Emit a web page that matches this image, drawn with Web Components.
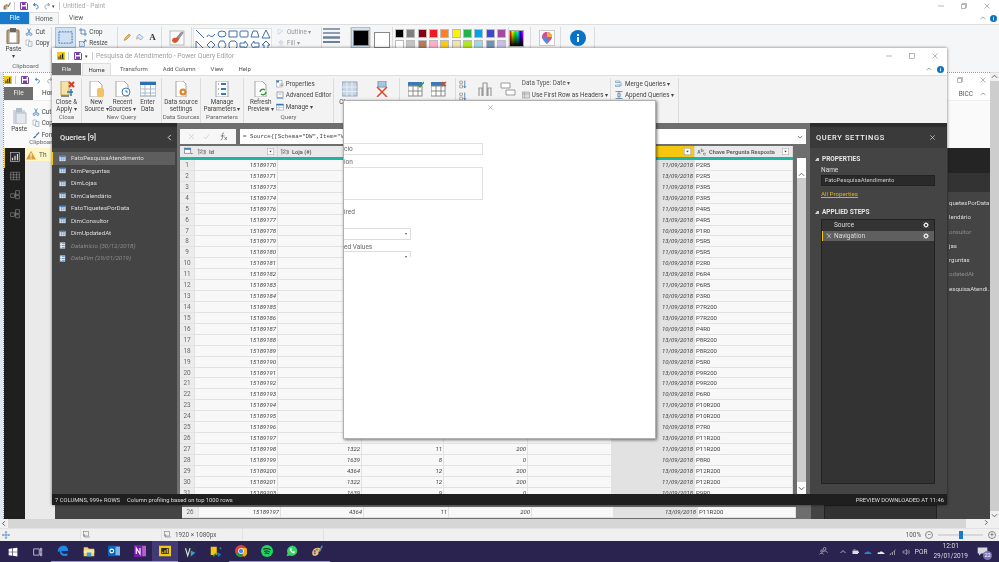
<!DOCTYPE html>
<html lang="en">
<head>
<meta charset="utf-8">
<title>Pesquisa de Atendimento - Power Query Editor</title>
<style>
  html, body { margin: 0; padding: 0; background: #f0f0f0; }
  body { font-family: Roboto, "Liberation Sans", sans-serif; color: #444; }
</style>
</head>
<body>
<desk-screen>
  <paint-chrome></paint-chrome>
  <paint-canvas></paint-canvas>
  <paint-foot></paint-foot>
  <task-bar></task-bar>
  <pbi-shot></pbi-shot>
  <pq-window>
    <pq-dialog></pq-dialog>
  </pq-window>
</desk-screen>

<script>
// every icon used on the page, drawn at a 16 unit box
const ICONS = {
  pbi: '<rect width="16" height="16" fill="#f2c811"/><path d="M3 13V9h2v4zM6.500 13V6h2v7zM10 13V3h2.500v10z" fill="#222"/><path d="M2 13.500h12" stroke="#222"/>',
  save: '<path d="M1 1h12l2 2v12H1z" fill="#fff" stroke="#7b3fa8" stroke-width="2"/><rect x="4" y="2" width="7" height="4" fill="#7b3fa8"/><rect x="4" y="9" width="8" height="5" fill="#7b3fa8"/>',
  undo: '<path d="M3 6l3-4M3 6l4 2M3 6c5-2 10 0 9 5-.5 2-2 3-4 3" fill="none" stroke="#2a7ab8" stroke-width="2"/>',
  redo: '<path d="M13 6l-3-4M13 6l-4 2M13 6C8 4 3 6 4 11c.5 2 2 3 4 3" fill="none" stroke="#9aa7b5" stroke-width="2"/>',
  paintapp: '<path d="M2 13c-2-6 4-11 9-9 3 1 2 4 0 4-2 1 0 4-2 5-2 2-6 2-7 0z" fill="#e8c27a"/><circle cx="5" cy="8" r="1.500" fill="#e33"/><circle cx="8" cy="6" r="1.500" fill="#3a7"/><circle cx="5" cy="11" r="1.500" fill="#37c"/><path d="M11 9l4-8" stroke="#68a" stroke-width="2"/>',
  paste: '<rect x="2" y="2" width="12" height="14" rx="1" fill="#c9a878" stroke="#8a6a3e"/><rect x="4" y="4" width="8" height="11" fill="#fff" stroke="#999"/><rect x="5" y="0" width="6" height="4" fill="#666"/>',
  pastedim: '<rect x="2" y="2" width="12" height="14" fill="#cfd6de"/><rect x="5" y="5" width="10" height="11" fill="#e4e8ee" stroke="#b4bcc8"/><rect x="5" y="0" width="6" height="4" fill="#b4bcc8"/>',
  cut: '<path d="M5 1l5 9M11 1l-5 9" stroke="#3b78b5" stroke-width="1.500"/><circle cx="4.500" cy="12.500" r="2.300" fill="none" stroke="#3b78b5" stroke-width="1.500"/><circle cx="11.500" cy="12.500" r="2.300" fill="none" stroke="#3b78b5" stroke-width="1.500"/>',
  copy: '<path d="M2 2h7v10H2z" fill="#fff" stroke="#7f8fa6"/><path d="M7 5h7v10H7z" fill="#eaf0f7" stroke="#7f8fa6"/>',
  brushsm: '<path d="M2 14l4-5 3 2-4 4zM7 8l6-6 2 2-6 6z" fill="#5a7fa8"/>',
  select: '<rect x="1" y="2" width="14" height="12" fill="#cfe0f2" stroke="#3f6fa8" stroke-dasharray="2 1"/>',
  crop: '<path d="M4 0v12h12M0 4h12v12" fill="none" stroke="#3b6ea5" stroke-width="1.500"/>',
  resize: '<rect x="1" y="5" width="10" height="10" fill="#dbe6f2" stroke="#3b6ea5"/><path d="M8 8l6-6M10 2h4v4" fill="none" stroke="#3b6ea5" stroke-width="1.500"/>',
  pencil: '<path d="M2 15l2-5 8-8 3 3-8 8z" fill="#e9b44c" stroke="#a87a20"/>',
  fill: '<path d="M7 2l7 7-5 5-7-7z" fill="#dfe9f5" stroke="#3b6ea5"/><path d="M2 8c-2 3-1 5 0 5s2-2 0-5z" fill="#e2654a"/>',
  brush: '<rect x="1" y="1" width="14" height="14" fill="#fafafa" stroke="#bbb"/><path d="M3 11c2 3 5 2 6 0L14 3l-2-1-5 6c-2-1-4 0-4 3z" fill="#d9542b"/><path d="M9 8l5-6" stroke="#8a9bb0" stroke-width="2"/>',
  outline: '<path d="M2 14l3-1 8-8-2-2-8 8zM1 2h7v2H3v9H1z" fill="#c2ccd8"/>',
  filla: '<path d="M8 2l5 5-5 5-5-5zM2 14h12" fill="#c2ccd8" stroke="#a8b4c2"/>',
  sizeic: '<path d="M0 2h16M0 6h16" stroke="#6d8099" stroke-width="1.500"/><path d="M0 10.500h16" stroke="#6d8099" stroke-width="2.500"/><path d="M0 15h16" stroke="#6d8099" stroke-width="2"/>',
  p3d: '<rect x=".5" y=".5" width="15" height="15" fill="#fff" stroke="#ccc"/><path d="M8 2c3 0 5 2 5 5 0 2-3 5-5 7-2-2-5-5-5-7 0-3 2-5 5-5z" fill="#d24f9a"/><path d="M8 2c3 0 5 2 5 5H8z" fill="#f0b43c"/><path d="M3 7h5v7C6 12 3 9 3 7z" fill="#4a8fe0"/>',
  help: '<circle cx="8" cy="8" r="8" fill="#0a72c6"/><path d="M7 4h2v2H7zM7 7h2v5H7z" fill="#fff"/>',
  caret: '<path d="M3 10l5-4 5 4" fill="none" stroke="#888" stroke-width="1.500"/>',
  min: '<path d="M2 8h12" stroke="#888" stroke-width="1.200"/>',
  max: '<rect x="3" y="3" width="10" height="10" fill="none" stroke="#888" stroke-width="1.200"/>',
  restore: '<path d="M3 5h8v8H3zM5 5V3h8v8h-2" fill="none" stroke="#888" stroke-width="1.200"/>',
  close: '<path d="M3 3l10 10M13 3L3 13" stroke="#888" stroke-width="1.200"/>',
  closewhite: '<path d="M3 3l10 10M13 3L3 13" stroke="#ddd" stroke-width="1.500"/>',
  closeapply: '<rect x="2" y="0" width="8" height="14" fill="#f3e3a8" stroke="#caa84a"/><path d="M10 1l5 5M15 1l-5 5" stroke="#d83b2d" stroke-width="2"/><path d="M8 11h6M12 8v7" stroke="#2a7ab8" stroke-width="1.500"/><rect x="2" y="14" width="8" height="2" fill="#888"/>',
  newsrc: '<path d="M1 0h8l4 4v12H1z" fill="#fff" stroke="#a6a6a6"/><rect x="8" y="7" width="7" height="9" rx="2" fill="#f3c063"/>',
  recent: '<path d="M1 0h8l4 4v12H1z" fill="#fff" stroke="#a6a6a6"/><circle cx="11" cy="11" r="4" fill="#fff" stroke="#3b78b5"/><path d="M11 9v2h2" fill="none" stroke="#3b78b5"/>',
  enter: '<rect x="0" y="1" width="16" height="14" fill="#fff" stroke="#8aa0b8"/><rect x="0" y="1" width="16" height="3" fill="#2f6fb3"/><path d="M0 8h16M0 12h16M5 4v11M10.500 4v11" stroke="#a8b8c8"/>',
  dss: '<path d="M3 0h7l3 3v13H3z" fill="#fff" stroke="#a6a6a6"/><circle cx="10" cy="11" r="3.500" fill="#e2852a"/><circle cx="10" cy="11" r="1.300" fill="#fff"/>',
  params: '<rect x="2" y="0" width="12" height="16" fill="#fff" stroke="#9aa7b5"/><path d="M7 3h5M7 8h5M7 13h5" stroke="#3b78b5" stroke-width="2"/><path d="M4 3h1M4 8h1M4 13h1" stroke="#666"/>',
  refresh: '<path d="M2 0h7l4 4v12H2z" fill="#fff" stroke="#a6a6a6"/><path d="M7 11a3 3 0 0 1 5-2M13 11a3 3 0 0 1-5 2" fill="none" stroke="#3f9a3f" stroke-width="1.500"/>',
  props: '<rect x="1" y="1" width="11" height="13" fill="#fff" stroke="#7f8fa6"/><rect x="1" y="1" width="5" height="4" fill="#3b78b5"/><path d="M7 8h8M7 11h8" stroke="#666"/>',
  adved: '<rect x="2" y="2" width="12" height="11" fill="#fff" stroke="#555"/><path d="M1 15h14M5 6h6" stroke="#3b78b5"/>',
  manage: '<rect x="1" y="2" width="14" height="12" fill="#fff" stroke="#6f8aa8"/><rect x="1" y="2" width="14" height="3" fill="#3b78b5"/><path d="M1 9h14M6 5v9" stroke="#9ab"/>',
  choose: '<rect x="0" y="1" width="15" height="14" fill="#c7d5e5" stroke="#8fa3b8"/><path d="M5 1v14M10 1v14M0 6h15M0 10.500h15" stroke="#e8eef5"/>',
  remcol: '<path d="M4 0h8v6H4z" fill="#a9c4de" stroke="#7f9ab5"/><path d="M3 6l10 10M13 6L3 16" stroke="#d84a2a" stroke-width="1.500"/>',
  keep: '<rect x="0" y="1" width="14" height="4" fill="#3b78b5"/><rect x="0" y="5" width="14" height="10" fill="#fff" stroke="#888"/><path d="M0 10h14M5 5v10M10 5v10" stroke="#888"/><path d="M10 4l2 2 4-5" fill="none" stroke="#3f9a3f" stroke-width="1.500"/>',
  remrow: '<rect x="0" y="1" width="14" height="4" fill="#3b78b5"/><rect x="0" y="5" width="14" height="10" fill="#fff" stroke="#888"/><path d="M0 10h14M5 5v10M10 5v10" stroke="#888"/><path d="M11 1l4 4M15 1l-4 4" stroke="#d84a2a" stroke-width="1.500"/>',
  sortaz: '<path d="M12 1v12M10 11l2 3 2-3" fill="none" stroke="#3b78b5" stroke-width="1.500"/><path d="M3 2h5v4H3zM3 9h5v5H3z" fill="none" stroke="#777"/>',
  split: '<path d="M2 15V7h3v8M6 15V2h4v13M11 15V7h3v8" fill="none" stroke="#9a9a9a" stroke-width="1.200"/>',
  group: '<path d="M1 2h9v5H1zM6 9h9v5H6z" fill="#fff" stroke="#999"/>',
  typedoc: '<rect x="1" y="2" width="14" height="12" fill="#ddd" stroke="#888"/><path d="M1 6h14M5 2v12" stroke="#888"/>',
  merge: '<path d="M1 2h9v3H1zM1 10h9v3H1z" fill="none" stroke="#3b78b5"/><path d="M12 4v7M10 9l2 2 2-2" fill="none" stroke="#3b78b5"/>',
  append: '<path d="M1 1h14M8 1v14M1 15h14" stroke="#3b78b5" stroke-width="1.500"/><path d="M5 5h6v6H5z" fill="none" stroke="#777"/>',
  table: '<rect x="1" y="2" width="14" height="12" fill="#fff"/><path d="M1 2h14v3H1z" fill="#4e83bd"/><path d="M1 7h14M1 11h14M6 2v12M11 2v12" stroke="#4e83bd" stroke-width="1.200"/>',
  paramq: '<rect x="2" y="1" width="12" height="14" fill="#dfe9f2"/><path d="M7 3h6M7 8h6M7 13h6" stroke="#4e83bd" stroke-width="2"/><path d="M3 3h2M3 8h2M3 13h2" stroke="#888" stroke-width="2"/>',
  gear: '<circle cx="8" cy="8" r="4.500" fill="none" stroke="#eee" stroke-width="3"/><path d="M8 0v3M8 13v3M0 8h3M13 8h3M2 2l2 2M12 12l2 2M2 14l2-2M12 4l2-2" stroke="#eee" stroke-width="2"/>',
  cross: '<path d="M3 2l10 12M13 2L3 14M2 4l3-3" stroke="#eee" stroke-width="1.500" fill="none"/>',
  report: '<rect x="1" y="1" width="14" height="14" fill="#2d2d2d" stroke="#ccc"/><path d="M4 13V9M8 13V6M12 13V3" stroke="#ddd" stroke-width="2"/>',
  datav: '<path d="M1 2h14v12H1zM1 6h14M1 10h14M5.500 2v12M10.500 2v12" fill="none" stroke="#8a8a8a"/>',
  relat: '<path d="M1 6h6v6H1zM9 1h6v6H9zM9 9h6v5H9zM7 9h2M9 4v7" fill="none" stroke="#8a8a8a"/>',
  warn: '<path d="M8 1l8 14H0z" fill="#d9a03a"/><path d="M8 5v6M8 12v2" stroke="#fff" stroke-width="1.600"/>',
  corner: '<rect x="1" y="2" width="11" height="9" fill="#fff" stroke="#557"/><rect x="1" y="2" width="11" height="3" fill="#3b78b5"/><path d="M12 11l2 2 2-2" fill="#444"/>',
  ddown: '<rect x=".5" y=".5" width="15" height="15" fill="#fff" stroke="#999"/><path d="M5 6h6l-3 4z" fill="#444"/>',
  num: '<path d="M1 4l2-2v11M5 6c0-3 4-3 4-1 0 2-4 3-4 5h4M10 11c1 1 4 1 4-1 0-1-1-2-3-2 2 0 3-1 3-2 0-1-3-2-4 0" fill="none" stroke="#666" stroke-width="1.200"/>',
  abc: '<path d="M1 12l2-8 2 8M2 9h2M7 1v6h2c2 0 2-3 0-3H7M14 11c-1-1-4-1-4 1s3 3 4 1" fill="none" stroke="#666" stroke-width="1.200"/>',
  chevdown: '<path d="M2 5l6 6 6-6" fill="none" stroke="#555" stroke-width="2"/>',
  chevup: '<path d="M2 11l6-6 6 6" fill="none" stroke="#555" stroke-width="2"/>',
  chevleftw: '<path d="M11 2L5 8l6 6" fill="none" stroke="#eee" stroke-width="2"/>',
  chevleft: '<path d="M11 3L6 8l5 5" fill="none" stroke="#444" stroke-width="2"/>',
  chevright: '<path d="M5 3l5 5-5 5" fill="none" stroke="#444" stroke-width="2"/>',
  fx: '<path d="M9 2C6 1 6 4 6 7s0 7-3 7M3 7h7M10 9l4 5M14 9l-4 5" fill="none" stroke="#555" stroke-width="1.200"/>',
  tick: '<path d="M2 9l4 4 8-10" fill="none" stroke="#c4c4c4" stroke-width="1.500"/>',
  xgray: '<path d="M2 2l12 12M14 2L2 14" stroke="#c4c4c4" stroke-width="1.500"/>',
  move: '<path d="M8 1v14M1 8h14M6 3l2-2 2 2M6 13l2 2 2-2M3 6L1 8l2 2M13 6l2 2-2 2" fill="none" stroke="#3b78b5" stroke-width="1.400"/>',
  shot: '<rect x="1" y="1" width="10" height="9" fill="none" stroke="#667"/><path d="M3 6v6h11" fill="none" stroke="#667"/>',
  start: '<path d="M1 3l6-1v5.500H1zM8 2l7-1v6.500H8zM1 8.500h6V14l-6-1zM8 8.500h7V15l-7-1z" fill="#fff"/>',
  taskview: '<path d="M1 3h9v10H1zM12 2h2v5h-2zM12 9h2v5h-2z" fill="none" stroke="#cfcfdc" stroke-width="1.300"/>',
  edge: '<path d="M1 9C1 3 5 1 9 1c4 0 6 3 6 7H6c0 3 4 5 8 3v3c-5 2-11 0-10-6-1 1-2 1-3 1z" fill="#1e88e5"/>',
  folder: '<path d="M1 3h5l2 2h7v10H1z" fill="#f4d36b"/><path d="M1 7h14v4H1z" fill="#f9e7a8"/><rect x="5" y="10" width="6" height="5" fill="#3aa0e0"/>',
  outlook: '<rect x="5" y="2" width="11" height="12" fill="#79b8ee"/><rect x="0" y="1" width="10" height="14" fill="#0a64b8"/><circle cx="5" cy="8" r="2.500" fill="none" stroke="#fff" stroke-width="1.500"/>',
  onenote: '<rect x="4" y="1" width="12" height="14" fill="#b35fd0"/><rect x="0" y="0" width="11" height="16" fill="#7719aa"/><path d="M3 12V4l5 8V4" fill="none" stroke="#fff" stroke-width="1.500"/>',
  pbitask: '<rect width="16" height="14" y="1" fill="#f2c811"/><rect x="3" y="4" width="10" height="8" fill="#2b2b2b"/><path d="M5 11V9M8 11V7M11 11V5" stroke="#f2c811" stroke-width="1.500"/>',
  vs: '<rect width="16" height="16" fill="#2a2a44"/><path d="M2 3l3 10 3-10" fill="none" stroke="#ddd" stroke-width="1.500"/><path d="M9 6l6 3-6 5z" fill="#3b9ad8"/>',
  shapes: '<rect x="1" y="1" width="8" height="11" fill="#f2c811"/><path d="M9 8l6 3-4 4z" fill="#1d7ac8"/><path d="M4 14l4-4M13 2l2 2" stroke="#2a8a4a" stroke-width="2"/>',
  chrome: '<circle cx="8" cy="8" r="8" fill="#db4437"/><path d="M8 8L1 12a8 8 0 0 0 7 4l4-7z" fill="#0f9d58"/><path d="M8 8l4 8a8 8 0 0 0 3-12H8z" fill="#f4b400"/><circle cx="8" cy="8" r="3.500" fill="#4285f4" stroke="#fff"/>',
  spotify: '<circle cx="8" cy="8" r="8" fill="#1ed760"/><path d="M3 5.500c4-1 7-1 10 1M4 8.500c3-1 6-.5 8 1M5 11c2-.5 4-.5 6 1" fill="none" stroke="#111" stroke-width="1.300"/>',
  whats: '<path d="M1 15l1-4C0 6 4 1 8 1s7 3 7 7-5 8-10 6z" fill="#37d366"/><path d="M5 5c0 3 3 6 6 6l1-2-2-1-1 1-2-2 1-1-1-2z" fill="#fff"/>',
  people: '<circle cx="5" cy="9" r="2" fill="none" stroke="#ddd"/><circle cx="10" cy="5" r="2.500" fill="none" stroke="#ddd"/><path d="M1 15c0-3 7-3 7 0M7 11c1-3 7-3 8 1" fill="none" stroke="#ddd"/>',
  battery: '<rect x="1" y="5" width="11" height="7" fill="#ddd"/><rect x="12" y="7" width="2" height="3" fill="#ddd"/><path d="M3 3h4" stroke="#ddd"/>',
  cloudb: '<path d="M1 12c0-3 2-4 4-3 1-3 6-3 7 0 2 0 3 1 3 3z" fill="#1e88e5"/>',
  cloudw: '<path d="M1 12c0-3 2-4 4-3 1-3 6-3 7 0 2 0 3 1 3 3z" fill="#eee"/>',
  wifi: '<path d="M2 14h2v-3H2zM6 14h2V8H6zM10 14h2V5h-2z" fill="#8d8da5"/><path d="M1 14L14 3" stroke="#aaa"/>',
  sound: '<path d="M2 6h3l4-3v10l-4-3H2z" fill="none" stroke="#ddd"/><path d="M11 5c1 2 1 4 0 6M13 3c2 3 2 7 0 10" fill="none" stroke="#ddd"/>',
  notif: '<path d="M1 2h14v9H6l-3 3v-3H1z" fill="#d8d8e0"/>',
  up: '<path d="M3 10l5-5 5 5" fill="none" stroke="#ddd" stroke-width="1.500"/>'
};

class UiIco extends HTMLElement {
  constructor(){
    super();
    this.attachShadow({mode: 'open'});
  }
  connectedCallback(){
    const s = this.getAttribute('s') || 16;
    const w = this.getAttribute('w') || s;
    this.shadowRoot.innerHTML = `
      <style>:host{display:inline-flex;flex:none;line-height:0} svg{display:block}</style>
      <svg width="${w}" height="${s}" viewBox="0 0 16 16" preserveAspectRatio="none">${ICONS[this.getAttribute('n')] || ''}</svg>`;
  }
}
customElements.define('ui-ico', UiIco);

// ribbon group with the caption along the bottom
class RbGroup extends HTMLElement {
  constructor(){
    super();
    this.attachShadow({mode: 'open'});
  }
  connectedCallback(){
    const w = this.getAttribute('w');
    const label = this.getAttribute('label') || '';
    this.shadowRoot.innerHTML = `
      <style>
        :host{display:flex;flex-direction:column;flex:none;width:${w}px;box-sizing:border-box;border-right:1px solid #dcdcdc;margin:2px 0 0}
        .body{flex:1;display:flex;justify-content:center;align-items:flex-start;min-height:0}
        .cap{height:10px;line-height:9px;text-align:center;font-size:6.200px;color:#666;white-space:nowrap}
      </style>
      <div class="body"><slot></slot></div>
      <div class="cap">${label}</div>`;
  }
}
customElements.define('rb-group', RbGroup);

class RbBig extends HTMLElement {
  constructor(){
    super();
    this.attachShadow({mode: 'open'});
  }
  connectedCallback(){
    this.shadowRoot.innerHTML = `
      <style>
        :host{display:flex;flex-direction:column;align-items:center;flex:none;width:${this.getAttribute('w') || 26}px;padding-top:${this.getAttribute('top') || 3}px}
        .t{margin-top:2px;font-size:6.300px;line-height:6.600px;text-align:center;color:#444;white-space:nowrap}
      </style>
      <ui-ico n="${this.getAttribute('n')}" s="${this.getAttribute('s') || 16}"></ui-ico>
      <div class="t"><slot></slot></div>`;
  }
}
customElements.define('rb-big', RbBig);

class RbSmall extends HTMLElement {
  constructor(){
    super();
    this.attachShadow({mode: 'open'});
  }
  connectedCallback(){
    this.shadowRoot.innerHTML = `
      <style>
        :host{display:flex;align-items:center;gap:2px;height:11.500px;font-size:6.300px;color:#444;white-space:nowrap}
      </style>
      <ui-ico n="${this.getAttribute('n')}" s="8"></ui-ico><slot></slot>`;
  }
}
customElements.define('rb-small', RbSmall);

class WinButtons extends HTMLElement {
  constructor(){
    super();
    this.attachShadow({mode: 'open'});
  }
  connectedCallback(){
    const names = this.getAttribute('names').split(' ');
    const gap = this.getAttribute('gap') || 15;
    this.shadowRoot.innerHTML = `
      <style>:host{display:flex;align-items:center;gap:${gap}px}</style>
      ${names.map(n => `<ui-ico n="${n}" s="8"></ui-ico>`).join('')}`;
  }
}
customElements.define('win-buttons', WinButtons);

class DeskScreen extends HTMLElement {
  constructor(){
    super();
    this.attachShadow({mode: 'open'});
  }
  connectedCallback(){
    this.shadowRoot.innerHTML = `
      <style>
        :host{display:flex;flex-direction:column;position:relative;width:999px;height:562px;overflow:hidden;filter:blur(.35px);background:#f0f0f0}
      </style>
      <slot></slot>`;
  }
}
customElements.define('desk-screen', DeskScreen);

class PaintChrome extends HTMLElement {
  constructor(){
    super();
    this.attachShadow({mode: 'open'});
  }
  connectedCallback(){
    const row1 = ['#000','#7f7f7f','#880015','#ed1c24','#ff7f27','#fff200','#22b14c','#00a2e8','#3f48cc','#a349a4'];
    const row2 = ['#fff','#c3c3c3','#b97a57','#ffaec9','#ffc90e','#efe4b0','#b5e61d','#99d9ea','#7092be','#c8bfe7'];
    this.shadowRoot.innerHTML = `
      <style>
        :host{display:flex;flex-direction:column;height:73px;flex:none;background:#fff;font-size:6.500px;color:#666}
        .title{height:12px;display:flex;align-items:center;padding:0 8px 0 2px}
        .title .name{color:#a8a8a8;margin-left:3px}
        .title win-buttons{margin-left:auto}
        .sep{width:1px;height:8px;background:#ccc;flex:none}
        .tabs{height:13px;display:flex;align-items:flex-end;border-bottom:1px solid #dedede;box-sizing:border-box}
        .tab{height:12px;line-height:12px;padding:0 10px;color:#555}
        .tab.file{width:29px;padding:0;background:#1979ca;color:#fff;text-align:center}
        .tab.on{background:#f5f6f7;border:1px solid #dedede;border-bottom:0;box-sizing:border-box;width:30px;padding:0;text-align:center}
        .tabs .right{margin-left:auto;display:flex;align-items:center;gap:3px;padding:0 2px 2px 0}
        .rib{flex:1;display:flex;background:#f5f6f7;border-bottom:1px solid #dedede}
        .col{display:flex;flex-direction:column}
        .sel{width:21px;height:21px;background:#cfe2f3;border:1px solid #9ec3e6;box-sizing:border-box;display:flex;align-items:center;justify-content:center}
        .gal{display:grid;grid-template-columns:repeat(7,11px);grid-auto-rows:10.500px;align-items:center;justify-items:center;border:1px solid #dfe3e8;background:#fff;margin:1px 0 0 1px}
        .gal svg{display:block}
        .swatch{width:16px;height:16px;border:1px solid #888;box-sizing:border-box}
        .c1{width:21px;height:21px;background:#cfe2f3;border:1px solid #9ec3e6;box-sizing:border-box;display:flex;align-items:center;justify-content:center}
        .pal{display:grid;grid-template-columns:repeat(10,11.300px);grid-auto-rows:11px;justify-items:center;align-items:center;padding-top:1px}
        .pal i{display:block;width:9px;height:9px;border:1px solid #bbb;box-sizing:border-box}
        .rainbow{width:15px;height:15px;margin:3px 6px 0 0;border:1px solid #aaa;background:linear-gradient(to bottom,transparent,#000),linear-gradient(to right,#f00,#ff0,#0f0,#0ff,#00f,#f0f)}
        .info{margin-top:3px;line-height:0}
      </style>
      <div class="title">
        <ui-ico n="paintapp" s="9"></ui-ico>
        <i class="sep" style="margin-left:3px"></i>
        <ui-ico n="save" s="8" style="margin-left:5px"></ui-ico>
        <ui-ico n="undo" s="8" style="margin-left:4px"></ui-ico>
        <ui-ico n="redo" s="8" style="margin-left:3px"></ui-ico>
        <span style="font-size:5px;color:#333;margin-left:1px">&#9662;</span>
        <i class="sep" style="margin-left:4px"></i>
        <span class="name">Untitled - Paint</span>
        <win-buttons names="min restore close" gap="15"></win-buttons>
      </div>
      <div class="tabs">
        <div class="tab file">File</div>
        <div class="tab on">Home</div>
        <div class="tab">View</div>
        <div class="right"><ui-ico n="caret" s="8"></ui-ico><ui-ico n="help" s="7"></ui-ico></div>
      </div>
      <div class="rib">
        <rb-group w="52" label="Clipboard">
          <rb-big n="paste" s="16" w="24" top="1">Paste<br>&#9662;</rb-big>
          <div class="col" style="margin-top:-1px"><rb-small n="cut">Cut</rb-small><rb-small n="copy">Copy</rb-small></div>
        </rb-group>
        <rb-group w="66">
          <div class="sel"><ui-ico n="select" s="15"></ui-ico></div>
          <div class="col" style="margin:-1px 6px 0 3px"><rb-small n="crop">Crop</rb-small><rb-small n="resize">Resize</rb-small></div>
        </rb-group>
        <rb-group w="44">
          <div style="display:flex;gap:5px;padding-top:6px"><ui-ico n="pencil" s="8"></ui-ico><ui-ico n="fill" s="8"></ui-ico><span style="font:bold 9px/8px 'Liberation Serif',serif;color:#333">A</span></div>
        </rb-group>
        <rb-group w="30"><div style="padding-top:3px"><ui-ico n="brush" s="16"></ui-ico></div></rb-group>
        <rb-group w="130">
          <div class="gal">
            ${['M1 1l8 8','M1 8c2-6 3 4 8-3','M1 5a4 3 0 1 0 8 0a4 3 0 1 0-8 0','M1 2h8v6H1z','M1 3q0-1 1-1h6q1 0 1 1v4q0 1-1 1H2q-1 0-1-1z','M1 8l2-6h4l2 6z','M5 1l4 8H1z',
               'M1 1v8h8z','M5 1l4 4-4 4-4-4z','M3 1h4l2 4-2 4H3L1 5z','M3 1h4l2 2v4l-2 2H3L1 7V3z','M1 3h5V1l3 4-3 4V7H1z','M9 3H4V1L1 5l3 4V7h5z','M3 9V5H1l4-4 4 4H7v4z']
              .map(d => `<svg width="10" height="10" viewBox="0 0 10 10"><path d="${d}" fill="none" stroke="#3f6fa8"/></svg>`).join('')}
          </div>
          <div class="col" style="margin:-1px auto 0 5px;opacity:.55"><rb-small n="outline">Outline &#9662;</rb-small><rb-small n="filla">Fill &#9662;</rb-small></div>
        </rb-group>
        <rb-group w="29"><div style="margin-right:9px"><ui-ico n="sizeic" s="16" w="17"></ui-ico></div></rb-group>
        <rb-group w="20"><div class="c1"><div class="swatch" style="background:#000"></div></div></rb-group>
        <rb-group w="22"><div class="swatch" style="margin-top:5px;background:#fff"></div></rb-group>
        <rb-group w="116">
          <div class="pal">
            ${row1.concat(row2).map(c => `<i style="background:${c}"></i>`).join('')}
          </div>
        </rb-group>
        <rb-group w="22"><div class="rainbow"></div></rb-group>
        <rb-group w="30"><div style="padding:3px 0 0 3px"><ui-ico n="p3d" s="16"></ui-ico></div></rb-group>
        <rb-group w="34"><div class="info"><ui-ico n="help" s="16"></ui-ico></div></rb-group>
      </div>`;
  }
}
customElements.define('paint-chrome', PaintChrome);

class PaintCanvas extends HTMLElement {
  constructor(){
    super();
    this.attachShadow({mode: 'open'});
  }
  connectedCallback(){
    this.shadowRoot.innerHTML = `
      <style>
        :host{display:flex;flex:1;min-height:0;justify-content:flex-end;background:#dfe7f2}
        .sb{width:9px;background:#f0f0f0;display:flex;flex-direction:column;align-items:center}
        .thumb{flex:1;width:100%;margin:1px 0;background:#cdcdcd}
      </style>
      <div class="sb">
        <ui-ico n="chevup" s="7"></ui-ico>
        <div class="thumb"></div>
        <ui-ico n="chevdown" s="7"></ui-ico>
      </div>`;
  }
}
customElements.define('paint-canvas', PaintCanvas);

class PaintFoot extends HTMLElement {
  constructor(){
    super();
    this.attachShadow({mode: 'open'});
  }
  connectedCallback(){
    this.shadowRoot.innerHTML = `
      <style>
        :host{display:flex;flex-direction:column;flex:none;height:22px;background:#f0f0f0;font-size:6.300px;color:#555}
        .hs{height:9px;display:flex;align-items:center}
        .hs .thumb{height:100%;width:958px;background:#d6d6d6;margin:0 1px}
        .hs .end{margin-left:auto;padding-right:9px}
        .st{flex:1;display:flex;border-top:1px solid #e2e2e2}
        .cell{flex:none;width:81px;box-sizing:border-box;border-right:1px solid #e2e2e2;display:flex;align-items:center;padding-left:2px;gap:3px}
        .zoom{margin-left:auto;display:flex;align-items:center;padding-right:3px}
        .track{width:45px;height:2px;background:#d8d8d8;margin:0 5px;display:flex;align-items:center;padding-left:21px;box-sizing:border-box}
        .track i{display:block;width:4px;height:8px;background:#1979ca;flex:none}
        .round{width:8px;height:8px;border-radius:50%;border:1px solid #8a8a8a;box-sizing:border-box;display:flex;align-items:center;justify-content:center;line-height:5px;font-size:7px}
      </style>
      <div class="hs">
        <ui-ico n="chevleft" s="7"></ui-ico>
        <div class="thumb"></div>
        <div class="end"><ui-ico n="chevright" s="7"></ui-ico></div>
      </div>
      <div class="st">
        <div class="cell"><ui-ico n="move" s="8"></ui-ico></div>
        <div class="cell"><ui-ico n="shot" s="8"></ui-ico></div>
        <div class="cell"><ui-ico n="shot" s="8"></ui-ico>1920 &times; 1080px</div>
        <div class="cell"></div>
        <div class="zoom"><span style="margin-right:4px">100%</span><span class="round">&minus;</span><div class="track"><i></i></div><span class="round">+</span></div>
      </div>`;
  }
}
customElements.define('paint-foot', PaintFoot);

class TaskBar extends HTMLElement {
  constructor(){
    super();
    this.attachShadow({mode: 'open'});
  }
  connectedCallback(){
    const apps = [['start'],['taskview'],['edge',1],['folder',1],['outlook',1],['onenote',1],['pbitask',2],['vs'],['shapes'],['chrome',1],['spotify',1],['whats',1],['paintapp',1]];
    const tray = ['battery','cloudb','cloudw','wifi','sound'];
    this.shadowRoot.innerHTML = `
      <style>
        :host{display:flex;flex:none;height:21px;background:#2a2350;color:#ddd;font-size:6.500px}
        .app{width:25.400px;display:flex;align-items:center;justify-content:center;box-sizing:border-box;flex:none}
        .app.run{border-bottom:1px solid #9f97cf}
        .app.cur{background:#413a74;border-bottom:1px solid #9f97cf}
        .tray{margin-left:auto;display:flex;align-items:center;gap:4.500px}
        .lang{margin:0 1.500px 0 .5px}
        .clock{text-align:center;line-height:9.500px;margin-right:4.500px;white-space:nowrap}
        .note{position:relative;display:flex;margin-right:11px}
        .note span{position:absolute;right:-4px;bottom:-3px;width:9px;height:9px;border-radius:50%;background:#7c74b8;color:#fff;font-size:5.500px;line-height:9px;text-align:center}
      </style>
      ${apps.map(([n, r]) => `<div class="app ${r === 1 ? 'run' : r === 2 ? 'cur' : ''}"><ui-ico n="${n}" s="${n === 'start' || n === 'taskview' ? 10 : 12}"></ui-ico></div>`).join('')}
      <div class="tray">
        <span style="margin-right:7px"><ui-ico n="people" s="9"></ui-ico></span>
        <ui-ico n="up" s="8"></ui-ico>
        ${tray.map(n => `<ui-ico n="${n}" s="8"></ui-ico>`).join('')}
        <span class="lang">POR</span>
        <div class="clock">12:01<br>29/01/2019</div>
        <div class="note"><ui-ico n="notif" s="11"></ui-ico><span>22</span></div>
      </div>`;
  }
}
customElements.define('task-bar', TaskBar);

const rowData = [
  ['15189170','','','','11','P2R5'],['15189171','','','','13','P2R5'],['15189173','','','','11','P3R5'],['15189174','','','','13','P3R5'],
  ['15189176','','','','11','P4R5'],['15189177','','','','13','P4R5'],['15189178','','','','10','P1R0'],['15189179','','','','13','P5R5'],
  ['15189180','','','','11','P5R5'],['15189181','','','','10','P2R0'],['15189182','','','','13','P6R4'],['15189183','','','','11','P6R5'],
  ['15189184','','','','10','P3R0'],['15189185','','','','11','P7R200'],['15189186','','','','13','P7R200'],['15189187','','','','10','P4R0'],
  ['15189188','','','','13','P8R200'],['15189189','','','','11','P8R200'],['15189190','','','','10','P5R0'],['15189191','','','','13','P9R200'],
  ['15189192','','','','11','P9R200'],['15189193','','','','10','P6R0'],['15189194','','','','11','P10R200'],['15189195','','','','13','P10R200'],
  ['15189196','','','','10','P7R0'],['15189197','','','','13','P11R200'],['15189198','1322','11','200','11','P11R200'],['15189199','1639','8','0','10','P8R0'],
  ['15189200','4364','12','200','13','P12R200'],['15189201','1322','12','200','11','P12R200'],['15189203','1639','9','0','10','P9R0']
];

// one table row: number, id, loja, two numeric columns, blank, date, key
class GridRow extends HTMLElement {
  constructor(){
    super();
    this.attachShadow({mode: 'open'});
  }
  connectedCallback(){
    const [id, loja, a, b, day, key] = JSON.parse(this.getAttribute('data'));
    const cols = this.getAttribute('cols');
    const date = `${day}/09/2018`;
    this.shadowRoot.innerHTML = `
      <style>
        :host{display:grid;grid-template-columns:${cols};height:10.930px;flex:none;font-size:6px;line-height:10px;color:#444}
        div{background:#f8f8f8;border-right:1px solid #e2e2e2;border-bottom:1px solid #e2e2e2;box-sizing:border-box;padding:0 1px;overflow:hidden;white-space:nowrap}
        .n{background:#ececec;text-align:center;color:#666;font-size:6.400px}
        .r{text-align:right;font-style:italic}
        .sel{background:#e2e2e2}
      </style>
      <div class="n">${this.getAttribute('n')}</div>
      <div class="r">${id}</div><div class="r">${loja}</div><div class="r">${a}</div><div class="r">${b}</div><div></div>
      <div class="r sel">${date}</div><div>${key}</div>`;
  }
}
customElements.define('grid-row', GridRow);

class PqGrid extends HTMLElement {
  constructor(){
    super();
    this.attachShadow({mode: 'open'});
  }
  connectedCallback(){
    const cols = '15px 83px 84px 82px 84px 84px 83px 98px';
    this.shadowRoot.innerHTML = `
      <style>
        :host{display:flex;flex-direction:column;width:613px;flex:none;overflow:hidden;min-height:0}
        .head{display:grid;grid-template-columns:${cols};height:14px;flex:none;background:#e9e9e9;border-bottom:3px solid #1fb5a5;box-sizing:border-box;font-size:5.700px;font-weight:700;color:#666}
        .h{display:flex;align-items:center;padding:0 3px 0 2px;gap:2px;border-right:1px solid #d8d8d8;min-width:0;white-space:nowrap}
        .h ui-ico:last-child{margin-left:auto}
        .h.on{background:#f5c80f}
        .h.corner{padding:0 2px;border:0}
      </style>
      <div class="head">
        <div class="h corner"><ui-ico n="corner" s="9"></ui-ico></div>
        <div class="h"><ui-ico n="num" s="8" w="10"></ui-ico>Id<ui-ico n="ddown" s="7"></ui-ico></div>
        <div class="h"><ui-ico n="num" s="8" w="10"></ui-ico>Loja (#)<ui-ico n="ddown" s="7"></ui-ico></div>
        <div class="h"></div><div class="h"></div><div class="h"></div>
        <div class="h on"><ui-ico n="ddown" s="7"></ui-ico></div>
        <div class="h"><ui-ico n="abc" s="8" w="10"></ui-ico>Chave Pergunta Resposta<ui-ico n="ddown" s="7"></ui-ico></div>
      </div>
      ${rowData.map((r, i) => `<grid-row n="${i + 1}" cols="${cols}" data='${JSON.stringify(r)}'></grid-row>`).join('')}`;
  }
}
customElements.define('pq-grid', PqGrid);

class PqQueries extends HTMLElement {
  constructor(){
    super();
    this.attachShadow({mode: 'open'});
  }
  connectedCallback(){
    const items = [['FatoPesquisaAtendimento','table','on'],['DimPerguntas','table'],['DimLojas','table'],['DimCalend\u00e1rio','table'],['FatoTiquetesPorData','table'],['DimConsultor','table'],['DimUpdatedAt','table'],['DataIn\u00edcio (30/12/2018)','paramq','p'],['DataFim (29/01/2019)','paramq','p']];
    this.shadowRoot.innerHTML = `
      <style>
        :host{display:flex;flex-direction:column;width:125px;flex:none;background:#444;color:#ddd;font-size:6.200px}
        .hd{height:21px;flex:none;background:#3a3a3a;display:flex;align-items:center;justify-content:space-between;padding:0 4px 0 8px;font-size:7.500px;font-weight:500;color:#eee;margin-bottom:4px}
        .it{height:12.500px;flex:none;display:flex;align-items:center;gap:5px;padding-left:6px;margin-right:2px;border-left:1px solid transparent;white-space:nowrap}
        .it.on{background:#5e5e5e;border-left-color:#f2c811}
        .it.p{color:#8c8c8c;font-style:italic}
      </style>
      <div class="hd">Queries [9]<ui-ico n="chevleftw" s="7"></ui-ico></div>
      ${items.map(([t, ic, c]) => `<div class="it ${c || ''}"><ui-ico n="${ic}" s="7"></ui-ico>${t}</div>`).join('')}`;
  }
}
customElements.define('pq-queries', PqQueries);

class PqSettings extends HTMLElement {
  constructor(){
    super();
    this.attachShadow({mode: 'open'});
  }
  connectedCallback(){
    this.shadowRoot.innerHTML = `
      <style>
        :host{display:flex;flex-direction:column;width:137px;flex:none;background:#444;color:#ddd;font-size:6.500px}
        .hd{height:21px;flex:none;background:#3a3a3a;display:flex;align-items:center;justify-content:space-between;padding:0 11px 0 6px;font-size:7.500px;font-weight:500;letter-spacing:.6px;color:#eee}
        .sec{font-weight:700;font-size:6.500px;display:flex;align-items:center;gap:3px;padding-left:5px;color:#e6e6e6;height:10px;flex:none}
        .sec::before{content:"";border-left:2px solid transparent;border-bottom:3px solid #ccc;border-right:2px solid #ccc}
        .pad{padding-left:11px;padding-right:12px;display:flex;flex-direction:column;flex:none}
        .inp{height:11px;background:#2a2a2a;border:1px solid #222;box-sizing:border-box;line-height:9px;padding-left:3px;color:#ccc;margin-top:1px;font-size:5.900px}
        a{color:#d8ad2a;text-decoration:underline;margin-top:4px;line-height:9px;display:block;font-size:6.200px}
        .steps{flex:1;margin:2px 12px 10px 11px;background:#333;border:1px solid #222;box-sizing:border-box}
        .st{height:10.500px;display:flex;align-items:center;justify-content:space-between;padding:0 5px 0 3px;border-left:1px solid transparent;white-space:nowrap}
        .st span{display:flex;align-items:center;gap:2px}
        .st.on{background:#5f5f5f;border-left-color:#f2c811}
      </style>
      <div class="hd">QUERY SETTINGS<ui-ico n="closewhite" s="7"></ui-ico></div>
      <div class="sec" style="margin-top:6px">PROPERTIES</div>
      <div class="pad">
        <div style="line-height:8px;margin-top:2px">Name</div>
        <div class="inp">FatoPesquisaAtendimento</div>
        <a>All Properties</a>
      </div>
      <div class="sec" style="margin-top:8px">APPLIED STEPS</div>
      <div class="steps">
        <div class="st"><span style="padding-left:8px">Source</span><ui-ico n="gear" s="6"></ui-ico></div>
        <div class="st on"><span><ui-ico n="cross" s="6"></ui-ico>Navigation</span><ui-ico n="gear" s="6"></ui-ico></div>
      </div>`;
  }
}
customElements.define('pq-settings', PqSettings);

class PqWindow extends HTMLElement {
  constructor(){
    super();
    this.attachShadow({mode: 'open'});
  }
  connectedCallback(){
    this.shadowRoot.innerHTML = `
      <style>
        :host{position:absolute;left:52px;top:48px;width:895px;height:457px;display:flex;flex-direction:column;background:#fff;box-shadow:0 0 3px rgba(0,0,0,.55);font-size:6.500px;color:#555}
        .title{height:15px;flex:none;display:flex;align-items:center;padding:0 8px 0 5px}
        .title .name{color:#a0a0a0;margin-left:3px;font-size:6.700px}
        .title win-buttons{margin-left:auto}
        .sep{width:1px;height:8px;background:#ccc;flex:none}
        .tabs{height:13px;flex:none;display:flex;border-bottom:1px solid #ddd;box-sizing:border-box;align-items:stretch}
        .tab{line-height:12px;color:#555;flex:none;font-size:6px}
        .tab.file{width:29px;background:#6e6e6e;color:#eee;text-align:center}
        .tab.on{width:29px;background:#f3f3f3;text-align:center;border:1px solid #ddd;border-bottom:0;box-sizing:border-box;color:#333;margin-left:1px}
        .tabs .right{margin-left:auto;display:flex;align-items:center;gap:4px;padding-right:3px}
        .rib{height:47px;flex:none;display:flex;background:#f3f3f3;padding-left:0}
        .col{display:flex;flex-direction:column;align-items:flex-start}
        .dark{flex:1;min-height:0;display:flex;background:#2d2d2d}
        .main{display:flex;flex:1;min-height:0;border-top:4px solid #2d2d2d}
        .center{flex:1;min-width:0;background:#6e6e6e;display:flex;flex-direction:column;padding:2px 4px 0 3px;border-top:4px solid #6e6e6e;margin-top:-4px}
        .fx{height:15px;flex:none;display:flex;gap:4px}
        .btns{width:56px;background:#f7f7f7;display:flex;align-items:center;justify-content:space-around;padding:0 4px;box-sizing:border-box}
        .code{flex:1;background:#fff;display:flex;align-items:center;justify-content:space-between;padding:0 3px;font:5.800px "Liberation Mono",monospace;color:#444;white-space:nowrap}
        .gridwrap{flex:1;min-height:0;display:flex;margin-top:2px;gap:4px}
        .vs{width:9px;flex:none;background:#fff;margin-top:12px;display:flex;flex-direction:column;align-items:center}
        .vs .a{height:20px;display:flex;align-items:flex-end;flex:none}
        .vs .t{flex:1;width:100%;background:#cdcdcd}
        .vs .b{height:12px;flex:none;display:flex;align-items:center}
        .status{height:11px;flex:none;background:#1f1f1f;color:#ddd;font-size:5.800px;display:flex;align-items:center;padding:0 3px;white-space:nowrap}
        .status span:last-child{margin-left:auto}
      </style>
      <div class="title">
        <ui-ico n="pbi" s="8"></ui-ico>
        <i class="sep" style="margin-left:3px"></i>
        <ui-ico n="save" s="8" style="margin-left:5px"></ui-ico>
        <span style="font-size:5px;color:#333;margin-left:3px">&#9662;</span>
        <i class="sep" style="margin-left:4px"></i>
        <span class="name">Pesquisa de Atendimento - Power Query Editor</span>
        <win-buttons names="min max close" gap="15"></win-buttons>
      </div>
      <div class="tabs">
        <div class="tab file">File</div>
        <div class="tab on">Home</div>
        <div class="tab" style="margin-left:9px">Transform</div>
        <div class="tab" style="margin-left:15px">Add Column</div>
        <div class="tab" style="margin-left:15px">View</div>
        <div class="tab" style="margin-left:15px">Help</div>
        <div class="right"><ui-ico n="caret" s="8"></ui-ico><ui-ico n="help" s="7"></ui-ico></div>
      </div>
      <div class="rib">
        <rb-group w="30" label="Close"><rb-big n="closeapply" w="30">Close &amp;<br>Apply &#9662;</rb-big></rb-group>
        <rb-group w="80" label="New Query">
          <rb-big n="newsrc">New<br>Source &#9662;</rb-big>
          <rb-big n="recent">Recent<br>Sources &#9662;</rb-big>
          <rb-big n="enter" w="24">Enter<br>Data</rb-big>
        </rb-group>
        <rb-group w="39" label="Data Sources"><rb-big n="dss" w="38">Data source<br>settings</rb-big></rb-group>
        <rb-group w="43" label="Parameters"><rb-big n="params" w="42">Manage<br>Parameters &#9662;</rb-big></rb-group>
        <rb-group w="90" label="Query">
          <rb-big n="refresh" w="30">Refresh<br>Preview &#9662;</rb-big>
          <div class="col"><rb-small n="props">Properties</rb-small><rb-small n="adved">Advanced Editor</rb-small><rb-small n="manage">Manage &#9662;</rb-small></div>
        </rb-group>
        <rb-group w="66">
          <rb-big n="choose" w="31">Choose</rb-big>
          <rb-big n="remcol" w="33"></rb-big>
        </rb-group>
        <rb-group w="56">
          <rb-big n="keep" w="23"></rb-big>
          <rb-big n="remrow" w="23"></rb-big>
        </rb-group>
        <rb-group w="155">
          <div style="padding-top:2px;display:flex;flex-direction:column;gap:3px;margin-right:6px"><ui-ico n="sortaz" s="9"></ui-ico><ui-ico n="sortaz" s="9"></ui-ico></div>
          <rb-big n="split" w="24"></rb-big>
          <rb-big n="group" w="22"></rb-big>
          <div class="col" style="margin-left:3px"><div style="height:11px;line-height:11px;white-space:nowrap;font-size:6.300px">Data Type: Date &#9662;</div><rb-small n="typedoc">Use First Row as Headers &#9662;</rb-small></div>
        </rb-group>
        <rb-group w="68">
          <div class="col"><rb-small n="merge">Merge Queries &#9662;</rb-small><rb-small n="append">Append Queries &#9662;</rb-small></div>
        </rb-group>
      </div>
      <div class="dark">
        <div class="main" style="width:100%">
          <pq-queries></pq-queries>
          <div class="center">
            <div class="fx">
              <div class="btns"><ui-ico n="xgray" s="7"></ui-ico><ui-ico n="tick" s="7"></ui-ico><ui-ico n="fx" s="9"></ui-ico></div>
              <div class="code"><span>= Source{[Schema="DW",Item="V</span><ui-ico n="chevdown" s="6"></ui-ico></div>
            </div>
            <div class="gridwrap">
              <pq-grid></pq-grid>
              <div class="vs"><div class="a"><ui-ico n="chevup" s="7"></ui-ico></div><div class="t"></div><div class="b"><ui-ico n="chevdown" s="7"></ui-ico></div></div>
            </div>
          </div>
          <pq-settings></pq-settings>
        </div>
      </div>
      <div class="status"><span style="margin-right:7px">7 COLUMNS, 999+ ROWS</span><span>Column profiling based on top 1000 rows</span><span>PREVIEW DOWNLOADED AT 11:46</span></div>
      <slot></slot>`;
  }
}
customElements.define('pq-window', PqWindow);

// the modal is an overlay, the form fields flow inside it
class PqDialog extends HTMLElement {
  constructor(){
    super();
    this.attachShadow({mode: 'open'});
  }
  connectedCallback(){
    this.shadowRoot.innerHTML = `
      <style>
        :host{position:absolute;left:291px;top:52px;width:313px;height:339px;box-sizing:border-box;background:#fff;border:1px solid #b0b0b0;box-shadow:1px 1px 3px rgba(0,0,0,.55);display:flex;flex-direction:column;font-size:6.500px;color:#666}
        .x{align-self:flex-end;margin:3px 161px 0 0}
        .box{border:1px solid #e0e0e0;border-left:0;box-sizing:border-box;width:139px}
        .sel{border:1px solid #ddd;border-left:0;box-sizing:border-box;width:67px;display:flex;justify-content:flex-end;align-items:flex-start;padding:4px 3px 0 0}
        .sel i{display:block;border-left:1.500px solid transparent;border-right:1.500px solid transparent;border-top:2px solid #555}
        .lb{line-height:8px}
      </style>
      <div class="x"><ui-ico n="close" s="7"></ui-ico></div>
      <div class="box" style="height:12px;line-height:10px;margin-top:30px">cio</div>
      <div class="lb" style="margin-top:3px">ion</div>
      <div class="box" style="height:33px;margin-top:1px"></div>
      <div class="lb" style="margin-top:8px">ired</div>
      <div class="sel" style="height:12px;margin-top:12px"><i></i></div>
      <div class="lb" style="margin-top:3px">ed Values</div>
      <div class="sel" style="height:6px;border-bottom:0"><i></i></div>`;
  }
}
customElements.define('pq-dialog', PqDialog);

// the older Power BI capture pasted in the Paint canvas
class PbiShot extends HTMLElement {
  constructor(){
    super();
    this.attachShadow({mode: 'open'});
  }
  connectedCallback(){
    const cols = '17px 82px 83px 85px 83px 82px 84px 98px';
    const names = ['quetesPorData','lend\u00e1rio','onsultor','jas','rguntas','odatedAt','esquisaAtendi...'];
    this.shadowRoot.innerHTML = `
      <style>
        :host{position:absolute;left:3px;top:72px;width:987px;height:447px;display:flex;flex-direction:column;background:#fff;border-top:1px dotted #6fa3e0;border-left:1px dotted #6fa3e0;box-sizing:border-box;font-size:6.500px;color:#555}
        .title{height:14px;flex:none;display:flex;align-items:center;padding:0 3px 0 0}
        .title win-buttons{margin-left:auto}
        .sep{width:1px;height:8px;background:#ccc;flex:none}
        .tabs{height:13px;flex:none;display:flex;align-items:stretch;background:#fff}
        .tab.file{width:29px;background:#6e6e6e;color:#eee;line-height:12px;text-align:center}
        .tab.h{padding-left:9px;line-height:12px;color:#333}
        .tabs .r{margin-left:auto;display:flex;gap:6px;align-items:center;padding-right:3px;color:#555}
        .rib{height:47px;flex:none;display:flex;background:#fafafa;border-top:1px solid #eee}
        .col{display:flex;flex-direction:column;padding-top:3px}
        .body{flex:1;min-height:0;display:flex}
        .rail{width:21px;flex:none;background:linear-gradient(#f2c811,#f2c811) 0 0/1px 20px no-repeat #1f1f1f;display:flex;flex-direction:column;align-items:center;gap:9px;padding-top:4px;box-sizing:border-box}
        .side{width:30px;flex:none;background:#eaeaea}
        .warn{height:13px;background:#fff6c8;display:flex;align-items:center;padding-left:1px;gap:3px}
        .qs{width:127px;flex:none;background:#444}
        .grid{width:619px;flex:none;display:flex;flex-direction:column;justify-content:flex-end;background:#6e6e6e;padding-bottom:1px;box-sizing:border-box}
        .gap{width:10px;flex:none;background:#6e6e6e}
        .set{width:137px;flex:none;background:#444;display:flex;justify-content:center;align-items:flex-end}
        .set i{display:block;width:113px;height:14px;background:#333;border:1px solid #222;border-bottom:0;box-sizing:border-box;margin-left:2px}
        .q2{flex:1;min-width:0;background:#444;color:#ddd;display:flex;flex-direction:column;overflow:hidden;white-space:nowrap;font-size:6.100px}
        .q2 .a{height:25px;flex:none;background:#242424}
        .q2 .b{height:23px;flex:none;background:linear-gradient(#333 0 19px,#444 19px)}
        .q2 .it{height:14.300px;line-height:14.300px;flex:none;margin-left:1px}
        .q2 .dim{color:#8c8c8c}
      </style>
      <div class="title">
        <ui-ico n="pbi" s="8"></ui-ico>
        <i class="sep" style="margin-left:3px"></i>
        <ui-ico n="save" s="8" style="margin-left:5px"></ui-ico>
        <ui-ico n="undo" s="7" style="margin-left:5px"></ui-ico>
        <ui-ico n="redo" s="7" style="margin-left:5px"></ui-ico>
        <win-buttons names="restore close" gap="15"></win-buttons>
      </div>
      <div class="tabs">
        <div class="tab file">File</div>
        <div class="tab h">Home</div>
        <div class="r">BICC<ui-ico n="caret" s="8"></ui-ico></div>
      </div>
      <div class="rib">
        <rb-group w="78" label="Clipboard">
          <rb-big n="pastedim" s="16" w="25" top="5">Paste</rb-big>
          <div class="col"><rb-small n="cut">Cut</rb-small><rb-small n="copy">Copy</rb-small><rb-small n="brushsm">Form</rb-small></div>
          <div style="width:22px"></div>
        </rb-group>
      </div>
      <div class="body">
        <div class="rail"><ui-ico n="report" s="10"></ui-ico><ui-ico n="datav" s="10"></ui-ico><ui-ico n="relat" s="10"></ui-ico><ui-ico n="relat" s="10"></ui-ico></div>
        <div class="side"><div class="warn"><ui-ico n="warn" s="10"></ui-ico>Th</div></div>
        <div class="qs"></div>
        <div class="grid"><grid-row n="26" cols="${cols}" data='["15189197","4364","11","200","13","P11R200"]'></grid-row></div>
        <div class="gap"></div>
        <div class="set"><i></i></div>
        <div class="q2">
          <div class="a"></div><div class="b"></div>
          ${names.map((t, i) => `<div class="it ${i === 2 || i === 5 ? 'dim' : ''}">${t}</div>`).join('')}
        </div>
      </div>`;
  }
}
customElements.define('pbi-shot', PbiShot);
</script>
</body>
</html>
